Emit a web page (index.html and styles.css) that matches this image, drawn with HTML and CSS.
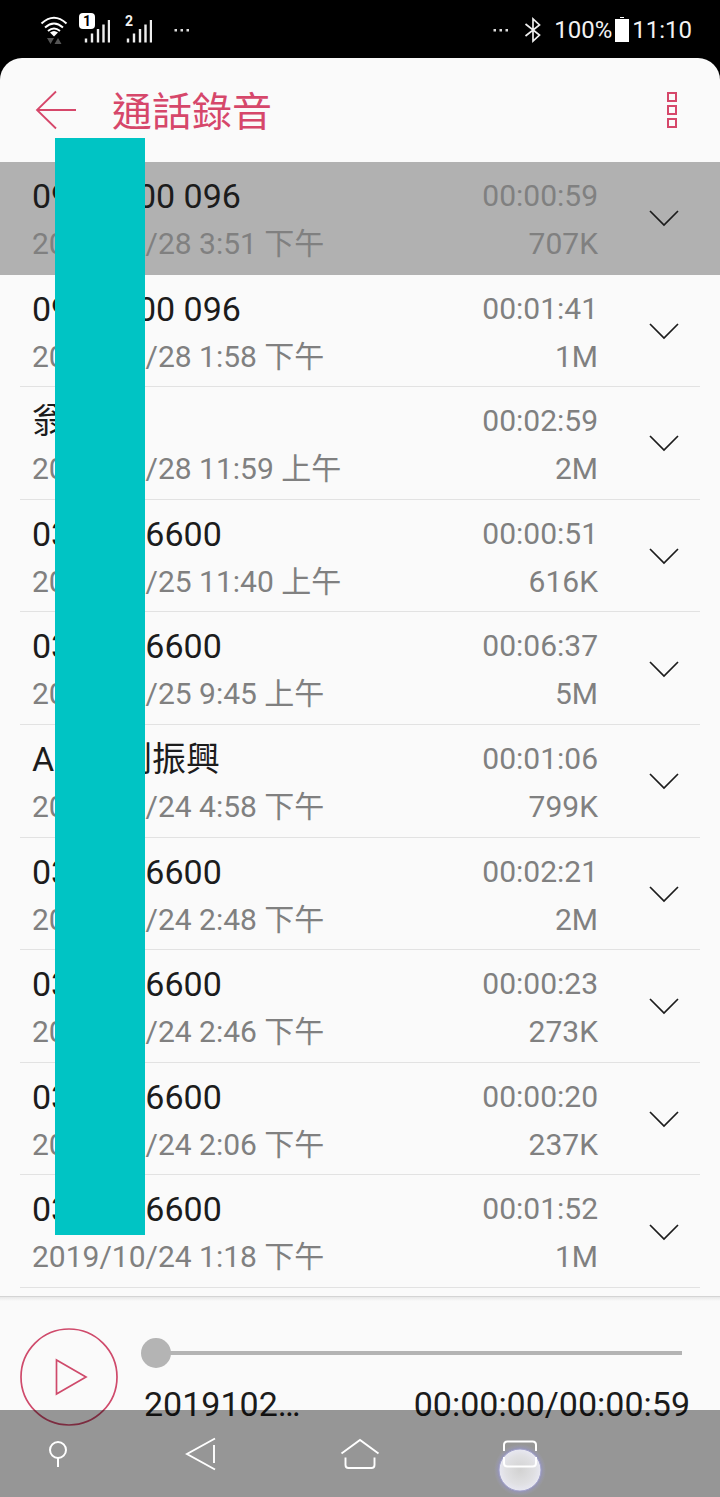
FILE: index.html
```html
<!DOCTYPE html>
<html lang="zh-Hant">
<head>
<meta charset="utf-8">
<meta name="viewport" content="width=device-width, initial-scale=1">
<title>通話錄音</title>
<link rel="stylesheet" href="styles.css">
</head>
<body>
<svg class="sprite" width="0" height="0" aria-hidden="true">
  <symbol id="chevron" viewBox="0 0 32 18"><path d="M2 2 L16 16 L30 2" fill="none" stroke="currentColor" stroke-width="1.7"/></symbol>
</svg>
<div class="phone">
  <div class="status">
    <div class="status-group">
      <svg class="wifi" width="28" height="30" viewBox="0 0 28 30" aria-hidden="true">
        <g fill="none" stroke="#fff" stroke-width="2">
          <path d="M1.500 8.500 Q14 -3 26.500 8.500"/><path d="M5 12.500 Q14 4.500 23 12.500"/><path d="M8 16 Q14 11 20 16"/>
        </g>
        <path d="M10 17.500 Q14 14.500 18 17.500 L14 21.500Z" fill="#fff"/>
        <path d="M7 23h7l-3.500 6zM14.500 29l3.500-6 3.500 6z" fill="#555"/>
      </svg>
      <span class="signal">
        <svg width="30" height="30" viewBox="0 0 30 30" aria-hidden="true"><path d="M6 23.500v4M12 18.500v9M18 14v13.500M23.500 9.500v18M29 5v22.500" stroke="#eee" stroke-width="2.400"/></svg>
        <span class="sim sim-active">1</span>
      </span>
      <span class="signal">
        <svg width="30" height="30" viewBox="0 0 30 30" aria-hidden="true"><path d="M6 23.500v4M12 18.500v9M18 14v13.500M23.500 9.500v18M29 5v22.500" stroke="#eee" stroke-width="2.400"/></svg>
        <span class="sim">2</span>
      </span>
      <svg class="dots" width="16" height="4" viewBox="0 0 16 4" aria-hidden="true"><path d="M.5 1h2.500v2.500H.5zM6.500 1H9v2.500H6.500zM12.500 1H15v2.500h-2.500z" fill="#ddd"/></svg>
    </div>
    <div class="status-group status-right">
      <svg class="more" width="16" height="4" viewBox="0 0 16 4" aria-hidden="true"><path d="M.5 1h2.500v2.500H.5zM6.500 1H9v2.500H6.500zM12.500 1H15v2.500h-2.500z" fill="#ddd"/></svg>
      <svg class="bluetooth" width="18" height="26" viewBox="0 0 18 26" aria-hidden="true"><path d="M1.500 7 L15.500 18 L9 24 V2 L15.500 8 L1.500 19" fill="none" stroke="#eee" stroke-width="1.700"/></svg>
      <span>100%</span>
      <svg class="battery" width="14" height="26" viewBox="0 0 14 26" aria-hidden="true"><path d="M5 0h4v1H5zM0 2h14v23H0z" fill="#fff"/></svg>
      <span>11:10</span>
    </div>
  </div>

  <div class="app">
    <header class="bar">
      <button class="icon-button" aria-label="返回"><svg width="42" height="40" viewBox="0 0 42 40"><path d="M21 1.500 L2 20 L21 38.500 M2 20 H41" fill="none" stroke="currentColor" stroke-width="1.800"/></svg></button>
      <h1>通話錄音</h1>
      <button class="icon-button" aria-label="更多選項"><svg width="12" height="40" viewBox="0 0 12 40"><path d="M2 3h8v8H2zM2 16h8v8H2zM2 29h8v8H2z" fill="none" stroke="currentColor" stroke-width="2"/></svg></button>
    </header>

    <ul class="list">
      <li class="row selected"><div class="inner"><div class="who"><span class="name">0900-000 096</span><time>2019/10/28 3:51 下午</time></div><div class="meta"><span>00:00:59</span><span>707K</span></div><button class="expand" aria-label="展開"><svg width="32" height="18"><use href="#chevron"/></svg></button></div></li>
      <li class="row"><div class="inner"><div class="who"><span class="name">0900-000 096</span><time>2019/10/28 1:58 下午</time></div><div class="meta"><span>00:01:41</span><span>1M</span></div><button class="expand" aria-label="展開"><svg width="32" height="18"><use href="#chevron"/></svg></button></div></li>
      <li class="row"><div class="inner"><div class="who"><span class="name">翁</span><time>2019/10/28 11:59 上午</time></div><div class="meta"><span>00:02:59</span><span>2M</span></div><button class="expand" aria-label="展開"><svg width="32" height="18"><use href="#chevron"/></svg></button></div></li>
      <li class="row"><div class="inner"><div class="who"><span class="name">03-000 6600</span><time>2019/10/25 11:40 上午</time></div><div class="meta"><span>00:00:51</span><span>616K</span></div><button class="expand" aria-label="展開"><svg width="32" height="18"><use href="#chevron"/></svg></button></div></li>
      <li class="row"><div class="inner"><div class="who"><span class="name">03-000 6600</span><time>2019/10/25 9:45 上午</time></div><div class="meta"><span>00:06:37</span><span>5M</span></div><button class="expand" aria-label="展開"><svg width="32" height="18"><use href="#chevron"/></svg></button></div></li>
      <li class="row"><div class="inner"><div class="who"><span class="name">A工m劉振興</span><time>2019/10/24 4:58 下午</time></div><div class="meta"><span>00:01:06</span><span>799K</span></div><button class="expand" aria-label="展開"><svg width="32" height="18"><use href="#chevron"/></svg></button></div></li>
      <li class="row"><div class="inner"><div class="who"><span class="name">03-000 6600</span><time>2019/10/24 2:48 下午</time></div><div class="meta"><span>00:02:21</span><span>2M</span></div><button class="expand" aria-label="展開"><svg width="32" height="18"><use href="#chevron"/></svg></button></div></li>
      <li class="row"><div class="inner"><div class="who"><span class="name">03-000 6600</span><time>2019/10/24 2:46 下午</time></div><div class="meta"><span>00:00:23</span><span>273K</span></div><button class="expand" aria-label="展開"><svg width="32" height="18"><use href="#chevron"/></svg></button></div></li>
      <li class="row"><div class="inner"><div class="who"><span class="name">03-000 6600</span><time>2019/10/24 2:06 下午</time></div><div class="meta"><span>00:00:20</span><span>237K</span></div><button class="expand" aria-label="展開"><svg width="32" height="18"><use href="#chevron"/></svg></button></div></li>
      <li class="row"><div class="inner"><div class="who"><span class="name">03-000 6600</span><time>2019/10/24 1:18 下午</time></div><div class="meta"><span>00:01:52</span><span>1M</span></div><button class="expand" aria-label="展開"><svg width="32" height="18"><use href="#chevron"/></svg></button></div></li>
    </ul>
    <div class="cover"></div>

    <section class="player">
      <button class="play" aria-label="播放"><svg width="98" height="98" viewBox="0 0 98 98"><circle cx="49" cy="49" r="48" fill="none" stroke="currentColor" stroke-width="1.700"/><path d="M36.500 32 V66 L66 49Z" fill="none" stroke="currentColor" stroke-width="1.700"/></svg></button>
      <div class="track">
        <input class="seek" type="range" min="0" max="59" value="0" aria-label="播放進度">
        <div class="caption"><span>2019102…</span><span>00:00:00/00:00:59</span></div>
      </div>
    </section>
  </div>

  <nav class="nav">
    <button aria-label="隱藏"><svg width="20" height="28" viewBox="0 0 20 28"><circle cx="10" cy="10" r="8" fill="none" stroke="#fff" stroke-width="2"/><path d="M10 18v9" stroke="#fff" stroke-width="2"/></svg></button>
    <button aria-label="上一頁"><svg width="32" height="36" viewBox="0 0 32 36"><path d="M30 2.500 L2 18 L30 33.500 M29 9v18" fill="none" stroke="#fff" stroke-width="1.900"/></svg></button>
    <button aria-label="主畫面"><svg width="40" height="34" viewBox="0 0 40 34"><path d="M1.500 16.500 L20 3 L38.500 16.500 M5.500 20.500 V28 Q5.500 31 8.500 31 H31.500 Q34.500 31 34.500 28 V20.500" fill="none" stroke="#fff" stroke-width="1.900"/></svg></button>
    <button aria-label="最近使用"><svg width="60" height="86" viewBox="0 0 60 86">
      <defs><radialGradient id="dot"><stop offset="0" stop-color="#d2d2d2"/><stop offset=".7" stop-color="#e0e0e3"/><stop offset="1" stop-color="#e8e8f2"/></radialGradient>
      <radialGradient id="glow"><stop offset=".78" stop-color="#9292bd"/><stop offset="1" stop-color="#a0a0b4" stop-opacity="0"/></radialGradient></defs>
      <circle cx="30" cy="59" r="26" fill="url(#glow)"/><circle cx="30" cy="59" r="21" fill="url(#dot)" stroke="#a0a0c8" stroke-width="1"/>
      <path d="M14 40V34Q14 30.500 17.500 30.500H42.500Q46 30.500 46 34V40M14 46V52Q14 55.500 17.500 55.500H42.500Q46 55.500 46 52V46" fill="none" stroke="#fff" stroke-width="2"/>
    </svg></button>
  </nav>
</div>
</body>
</html>
```
FILE: styles.css
```css
* { box-sizing: border-box; }

body {
  margin: 0;
  background: #000;
  color: #1c1c1c;
  font-family: Roboto, "Noto Sans CJK TC", sans-serif;
}

button {
  display: flex;
  align-items: center;
  justify-content: center;
  margin: 0;
  padding: 0;
  border: 0;
  background: none;
  color: inherit;
}

svg { display: block; flex: none; }
.sprite { position: absolute; }

.phone {
  position: relative;
  display: flex;
  flex-direction: column;
  min-height: 100vh;
}

.status {
  display: flex;
  justify-content: space-between;
  align-items: center;
  height: 58px;
  padding: 2px 28px 0 40px;
  color: #f2f2f2;
  font-size: 24px;
}
.status-group { display: flex; align-items: center; gap: 12px; }
.status-right { gap: 3px; }
.dots { margin-left: 10px; }
.more { margin-right: 12px; }
.bluetooth { margin-right: 9px; }
.signal { position: relative; }
.sim {
  position: absolute;
  top: -2px;
  left: -1px;
  width: 16px;
  font-size: 14px;
  font-weight: 700;
  line-height: 16px;
  text-align: center;
}
.sim-active { border-radius: 4px; background: #fff; color: #000; }

.app {
  position: relative;
  display: flex;
  flex: 1;
  flex-direction: column;
  border-radius: 22px 22px 0 0;
  background: #fafafa;
}

.bar {
  display: flex;
  align-items: center;
  height: 104px;
  padding: 0 42px 0 35px;
  color: #d6476a;
}
.bar h1 {
  flex: 1;
  margin: 0 0 0 35px;
  padding-top: 6px;
  font-size: 40px;
  font-weight: 400;
  line-height: 48px;
}

.list {
  display: flex;
  flex: 1;
  flex-direction: column;
  margin: 0 0 8px;
  padding: 0;
  list-style: none;
}
.row { display: flex; flex: 1; padding: 0 20px; }
.inner {
  display: flex;
  flex: 1;
  padding: 10px 0 5px 12px;
  border-bottom: 1px solid #e2e2e2;
}
.selected { background: #b1b1b1; }
.selected .inner { border-color: transparent; }
.who, .meta {
  display: flex;
  flex-direction: column;
  color: #808080;
  font-size: 30px;
  line-height: 48px;
  white-space: nowrap;
}
.who { flex: 1; }
.name { color: #1c1c1c; font-size: 34px; }
.meta { text-align: right; }
.expand { width: 72px; margin-left: 30px; padding-bottom: 4px; }

.cover {
  position: absolute;
  top: 80px;
  bottom: 262px;
  left: 55px;
  width: 90px;
  background: #00c4c4;
}

.player {
  display: flex;
  gap: 23px;
  min-height: 201px;
  padding: 31px 30px 0 20px;
  border-top: 1px solid #d4d4d4;
  background: linear-gradient(#e8e8e8, #fafafa 4px);
}
.play { align-self: flex-start; color: #cf4a6b; }
.track { display: flex; flex: 1; flex-direction: column; gap: 16px; min-width: 0; padding-top: 10px; }
.seek {
  height: 30px;
  margin: 0 8px 0 0;
  background: none;
  appearance: none;
}
.seek::-webkit-slider-runnable-track { height: 4px; background: linear-gradient(to right, transparent 15px, #b4b4b4 15px); }
.seek::-webkit-slider-thumb {
  width: 30px;
  height: 30px;
  margin-top: -13px;
  border-radius: 50%;
  background: #b4b4b4;
  appearance: none;
}
.caption {
  display: flex;
  justify-content: space-between;
  padding-left: 3px;
  font-size: 34px;
  line-height: 40px;
}

.nav {
  position: absolute;
  right: 0;
  bottom: 0;
  left: 0;
  display: grid;
  grid-template-columns: 116fr 170fr 148fr 172fr 114fr;
  height: 87px;
  background: rgba(0, 0, 0, 0.4);
}
```
